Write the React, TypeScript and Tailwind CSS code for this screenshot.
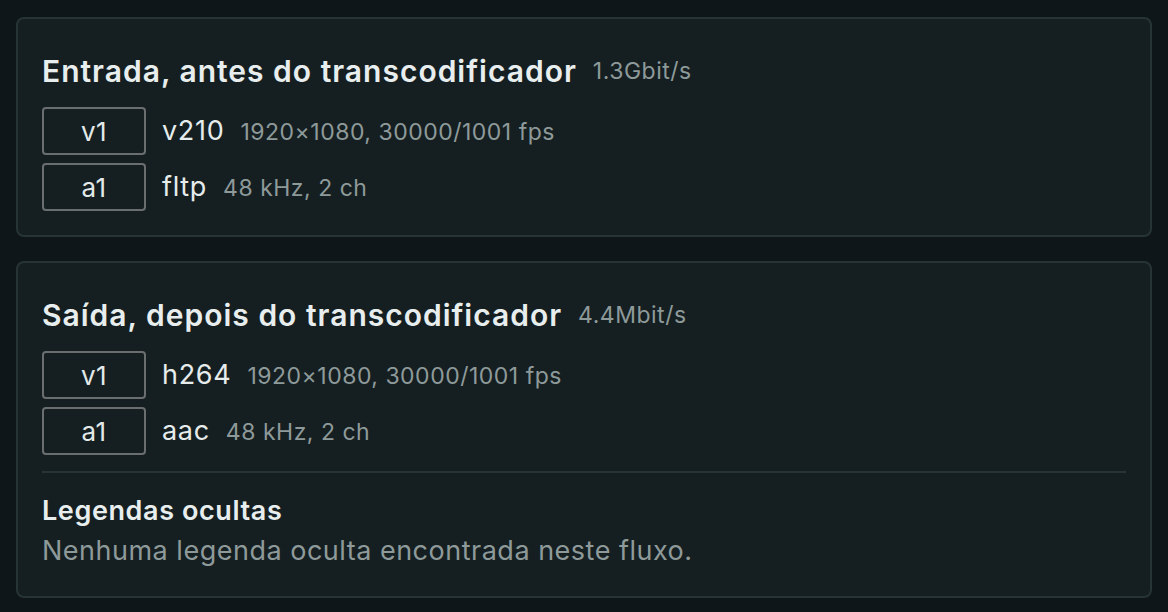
import React from "react";

type Stream = { id: string; codec: string; detail: string };

function Chip({ s }: { s: Stream }) {
  return (
    <div className="flex items-center gap-4 h-[48px]">
      <div className="w-[104px] h-[48px] border-2 border-[#6b6e6e] rounded-[4px] flex items-center justify-center text-[26px] tracking-[0.5px] text-[#e3e9e9]">
        {s.id}
      </div>
      <div className="flex items-baseline gap-[16px]">
        <span className="text-[27px] tracking-[0.7px] text-[#e6ecec]">{s.codec}</span>
        <span className="text-[23px] tracking-[0.5px] text-[#8e9a9a]">{s.detail}</span>
      </div>
    </div>
  );
}

function Card({
  title,
  rate,
  streams,
  children,
}: {
  title: string;
  rate: string;
  streams: Stream[];
  children?: React.ReactNode;
}) {
  return (
    <div className="border-2 border-[#263436] bg-[#151f21] rounded-[8px] p-[24px] flex flex-col gap-[8px]">
      <div className="h-[56px] flex items-center gap-[16px]">
        <span className="text-[30px] tracking-[1px] font-semibold text-[#e8eeee]">{title}</span>
        <span className="text-[23px] tracking-[0.5px] text-[#8e9a9a]">{rate}</span>
      </div>
      {streams.map((s) => (
        <Chip key={s.id} s={s} />
      ))}
      {children}
    </div>
  );
}

export default function App() {
  return (
    <div className="w-[1168px] h-[612px] bg-[#0f1619] pl-[16px] pr-[16px] pt-[17px] pb-[16px] flex flex-col gap-[24px] font-['Inter',sans-serif] overflow-hidden">
      <Card
        title="Entrada, antes do transcodificador"
        rate="1.3Gbit/s"
        streams={[
          { id: "v1", codec: "v210", detail: "1920×1080, 30000/1001 fps" },
          { id: "a1", codec: "fltp", detail: "48 kHz, 2 ch" },
        ]}
      />
      <Card
        title="Saída, depois do transcodificador"
        rate="4.4Mbit/s"
        streams={[
          { id: "v1", codec: "h264", detail: "1920×1080, 30000/1001 fps" },
          { id: "a1", codec: "aac", detail: "48 kHz, 2 ch" },
        ]}
      >
        <div className="mt-[8px] border-t-2 border-[#263436] pt-[18px] pb-[1px] flex flex-col">
          <div className="h-[40px] flex items-center text-[27px] tracking-[0.6px] font-semibold text-[#e8eeee]">
            Legendas ocultas
          </div>
          <div className="h-[40px] flex items-center text-[27px] tracking-[0.5px] text-[#8e9a9a]">
            Nenhuma legenda oculta encontrada neste fluxo.
          </div>
        </div>
      </Card>
    </div>
  );
}
